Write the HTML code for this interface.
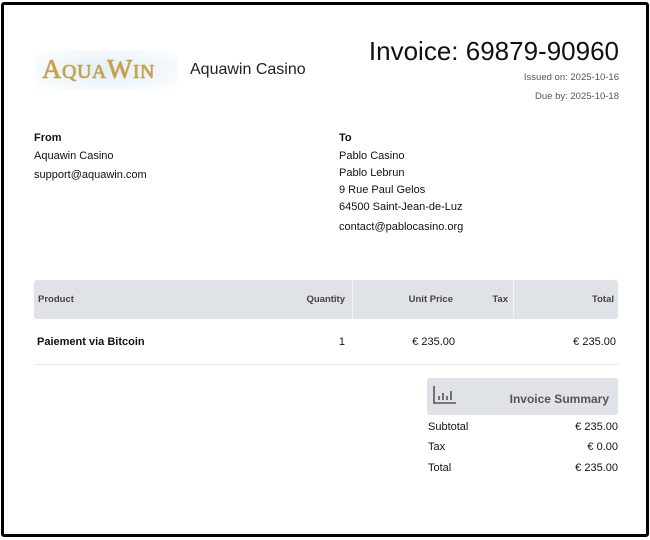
<!DOCTYPE html>
<html><head><meta charset="utf-8"><style>
*{margin:0;padding:0;box-sizing:border-box}
body{width:650px;height:540px;background:#fff;font-family:"Liberation Sans",sans-serif;color:#111;position:relative;overflow:hidden}
.frame{position:absolute;left:1px;top:2px;width:648px;height:535px;border:3px solid #000;border-radius:3px}
.a{position:absolute;white-space:nowrap}
.s{font-size:11px}
.r{text-align:right}
</style></head><body>
<div class="frame"></div>
<div class="a" style="left:36px;top:50px;width:142px;height:40px;background:radial-gradient(ellipse at center,#e4eff7 0%,#f3f8fb 60%,#fff 100%);border-radius:8px"></div>
<div class="a" style="left:42px;top:54px;font-family:'Liberation Serif',serif;font-size:27px;color:#c9a23a;letter-spacing:0.5px;text-shadow:0 0 1px #7a5a10">A<span style="font-size:20px">QUA</span>W<span style="font-size:20px">IN</span></div>
<div class="a" style="left:190px;top:61px;font-size:16px;color:#222">Aquawin Casino</div>
<div class="a r" style="right:31px;top:36px;font-size:26px;color:#111">Invoice: 69879-90960</div>
<div class="a r" style="right:31px;top:72px;font-size:9.5px;color:#555">Issued on: 2025-10-16</div>
<div class="a r" style="right:31px;top:91px;font-size:9.5px;color:#555">Due by: 2025-10-18</div>

<div class="a s" style="left:34px;top:132px;font-weight:bold">From</div>
<div class="a s" style="left:34px;top:150px">Aquawin Casino</div>
<div class="a s" style="left:34px;top:169px">support@aquawin.com</div>
<div class="a s" style="left:339px;top:132px;font-weight:bold">To</div>
<div class="a s" style="left:339px;top:150px">Pablo Casino</div>
<div class="a s" style="left:339px;top:167px">Pablo Lebrun</div>
<div class="a s" style="left:339px;top:184px">9 Rue Paul Gelos</div>
<div class="a s" style="left:339px;top:201px">64500 Saint-Jean-de-Luz</div>
<div class="a s" style="left:339px;top:221px">contact@pablocasino.org</div>

<div class="a" style="left:34px;top:280px;width:584px;height:39px;background:#dfe2e6;border-radius:3px"></div>
<div class="a" style="left:352px;top:280px;width:1px;height:39px;background:#f2f3f5"></div>
<div class="a" style="left:513px;top:280px;width:1px;height:39px;background:#f2f3f5"></div>
<div class="a" style="left:38px;top:294px;font-size:9.5px;color:#444;font-weight:bold">Product</div>
<div class="a r" style="right:305px;top:294px;font-size:9.5px;color:#444;font-weight:bold">Quantity</div>
<div class="a r" style="right:197px;top:294px;font-size:9.5px;color:#444;font-weight:bold">Unit Price</div>
<div class="a r" style="right:142px;top:294px;font-size:9.5px;color:#444;font-weight:bold">Tax</div>
<div class="a r" style="right:36px;top:294px;font-size:9.5px;color:#444;font-weight:bold">Total</div>
<div class="a s" style="left:37px;top:336px;font-weight:bold">Paiement via Bitcoin</div>
<div class="a s r" style="right:305px;top:336px">1</div>
<div class="a s r" style="right:195px;top:336px">€ 235.00</div>
<div class="a s r" style="right:34px;top:336px">€ 235.00</div>
<div class="a" style="left:34px;top:364px;width:584px;height:1px;background:#e8e8e8"></div>

<div class="a" style="left:427px;top:378px;width:191px;height:37px;background:#dfe2e6;border-radius:3px"></div>
<svg class="a" style="left:433px;top:385px" width="24" height="20" viewBox="0 0 24 20"><g stroke="#555" stroke-width="1.6" fill="none"><path d="M1 1V18H23"/><path d="M6 15V11M10 15V8M14 15V11M18 15V6"/></g></svg>
<div class="a r" style="right:41px;top:392px;font-size:12px;font-weight:bold;color:#555">Invoice Summary</div>
<div class="a s" style="left:428px;top:421px">Subtotal</div>
<div class="a s r" style="right:32px;top:421px">€ 235.00</div>
<div class="a s" style="left:428px;top:441px">Tax</div>
<div class="a s r" style="right:32px;top:441px">€ 0.00</div>
<div class="a s" style="left:428px;top:462px">Total</div>
<div class="a s r" style="right:32px;top:462px">€ 235.00</div>
</body></html>
